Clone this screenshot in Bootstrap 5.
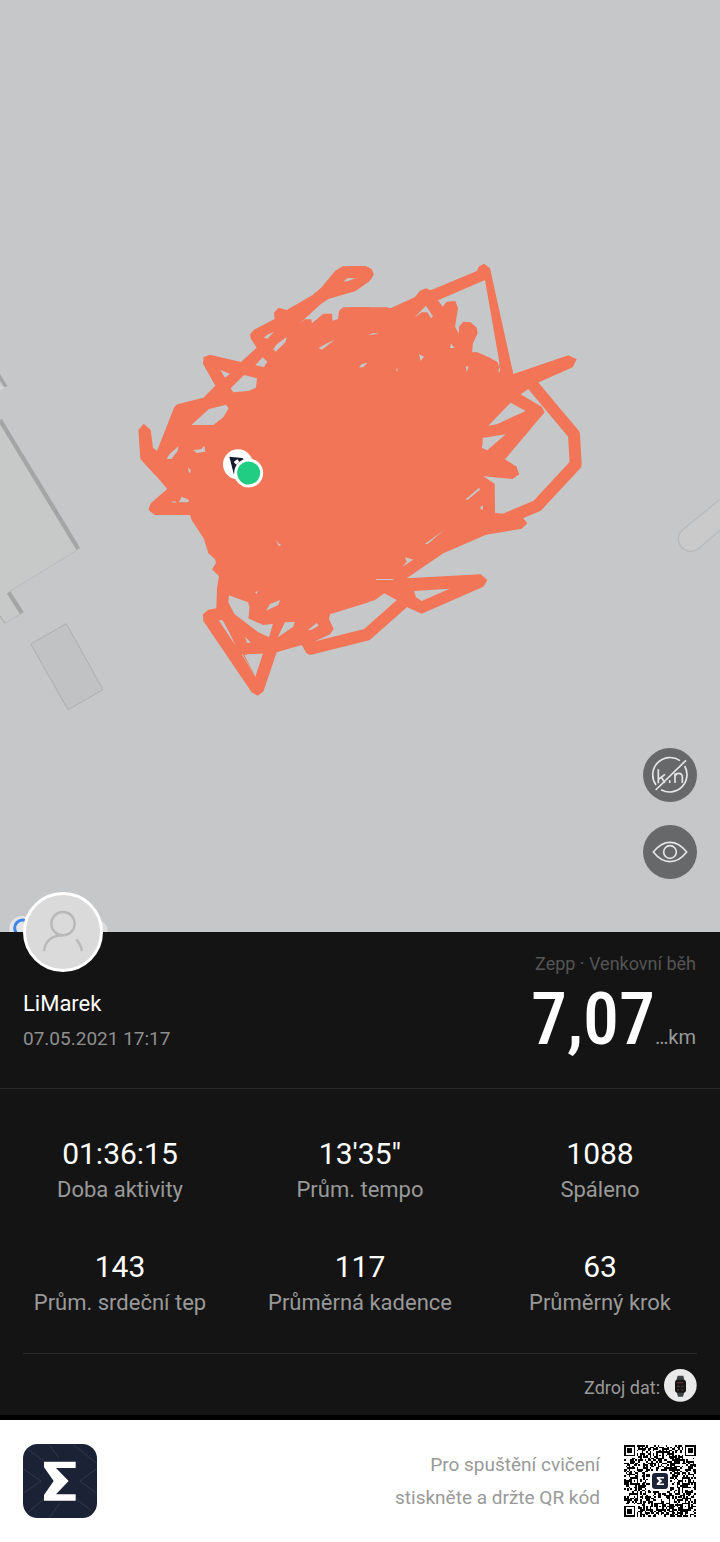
<!DOCTYPE html>
<html lang="cs">
<head>
<meta charset="utf-8">
<meta name="viewport" content="width=device-width, initial-scale=1">
<title>Zepp · Venkovní běh</title>
<link href="https://cdn.jsdelivr.net/npm/bootstrap@5.3.0/dist/css/bootstrap.min.css" rel="stylesheet">
<style>
  body { font-family: Roboto, "Noto Sans", sans-serif; background: #fff; }
  .route-map { background: #c6c7c9; }
  .map-tools { right: 23px; bottom: 53px; gap: 23px; }
  .tool-btn { width: 54px; height: 54px; background: #666869; border-radius: 50%; }
  .summary { background: #141414; border-bottom: 5px solid #000; }
  .runner { padding: 16px 24px 30px 23px; border-bottom: 1px solid #2b2b2b; }
  .avatar { left: 23px; top: -40px; width: 80px; height: 80px; border: 3px solid #fff; background: #dadada; }
  .runner-name { font-size: 22px; line-height: 30px; padding-top: 41px; color: #fff; }
  .run-date { font-size: 19px; line-height: 30px; margin-top: 5px; color: #8f8f8f; }
  .run-kind { font-size: 18px; line-height: 32px; color: #555; }
  .distance { font-family: "Roboto Condensed", Roboto, sans-serif; font-weight: 500; font-size: 72px; line-height: 77px; padding-top: 1px; color: #fff; }
  .unit { font-size: 20px; color: #999; }
  .stats { padding: 45px 0 28px; row-gap: 35px; }
  .stat-value { font-size: 30px; line-height: 40px; color: #fff; }
  .stat-label { font-size: 22px; line-height: 32px; margin: 0; color: #999; padding-bottom: 6px; }
  .source { margin: 0 23px; padding: 15px 0 13px; border-top: 1px solid #2b2b2b; font-size: 18px; color: #999; gap: 4px; }
  .app-bar { padding: 24px 24px 24px 23px; }
  .hint { font-size: 19px; line-height: 33px; color: #999; }
</style>
</head>
<body>
<main>
  <section class="route-map position-relative" aria-label="Mapa trasy">
    <svg class="d-block w-100" viewBox="0 0 2160 2796" role="img" aria-label="Trasa běhu">
      <g transform="translate(0 1080)">
        <path d="M0 175L235 568L28 695L70 757L15 790L0 770Z" fill="#c7c9c8"/>
        <path d="M0 180L235 567M26 697L66 760" stroke="#a4a6a5" stroke-width="13" fill="none"/>
        <path d="M0 42L22 78L14 82L0 62Z" fill="#a4a6a5"/>
        <path d="M0 75L12 83L0 92Z" fill="#d4d5d5"/>
        <path d="M235 568L28 695M70 757L15 790" stroke="#b9bbbb" stroke-width="3"/>
        <path d="M0 768L15 790" stroke="#a4a6a5" stroke-width="3"/>
        <path d="M92 852L199 791L309 989L204 1049Z" fill="#c1c2c4" stroke="#adafb1" stroke-width="3"/>
      </g>
      <path d="M2200 1465L2045 1592A37 37 0 0 0 2094 1647L2200 1556" fill="#cacaca" stroke="#b7b9bb" stroke-width="4"/>
      <g fill="#f17556">
        <path transform="translate(390 765)" d="M720 40L705 33L638 34L615 48L575 97L548 120L470 165L446 158L432 173L434 192L372 224L360 238L362 250L380 278L333 321L240 299L221 306L219 326L256 392L220 428L142 448L133 456L81 588L69 578L62 525L41 506L25 525L31 612L75 660L720 660L720 157L640 157L627 167L624 192L608 197L606 176L580 176L546 205L544 193L525 193L505 209L570 149L595 132L677 108L720 77Z"/>
        <path transform="translate(1050 765)" d="M0 33L45 33L65 42L71 58L64 72L15 106L0 112Z"/>
        <path transform="translate(1050 765)" d="M0 157L110 157L122 160L195 126L210 107L228 100L242 106L381 48L386 35L402 26L420 40L490 357L655 301L680 313L668 337L568 381L535 402L512 418L575 455L584 472L465 613L500 635L507 660L0 660Z"/>
        <path transform="translate(390 1395)" d="M50 0L112 72L62 115L55 135L75 150L180 150L185 165L222 222L235 265L255 282L258 295L246 313L267 333L261 370L259 430L235 434L219 448L220 468L365 682L383 692L400 680L440 562L515 540L552 530L600 508L611 492L597 462L600 448L720 410L720 0Z"/>
        <path transform="translate(1050 1395)" d="M0 0L485 0L500 10L507 28L488 42L400 34L434 56L435 143L465 147L520 160L532 175L515 191L408 209L280 265L170 340L392 328L412 346L400 365L215 446L175 428L140 405L103 385L75 405L0 428Z"/>
      </g>
      <g fill="none" stroke="#f17556" stroke-width="36" stroke-linejoin="round" stroke-linecap="round">
        <path d="M1588 1143L1722 1303L1727 1393L1612 1517L1510 1560"/>
        <path d="M1212 1805L1100 1904L932 1946L922 1928"/>
      </g>
      <g fill="#c6c7c9">
        <path transform="translate(390 765)" d="M640 80L652 70L677 69L655 78ZM402 248L410 240L432 230L412 251ZM430 283L440 268L470 246L466 262L437 290ZM376 331L398 307L412 320L402 336ZM271 345L300 356L285 368ZM302 400L342 360L381 370L378 398L355 408L310 412ZM184 510L237 462L288 449L296 460L280 487L250 510ZM110 612L118 598L145 574L143 588L124 612ZM190 585L213 583L223 572L226 590L200 594ZM174 637L182 645L181 655L176 650ZM566 280L585 268L614 255L575 284ZM688 336L695 327L712 323L700 337Z"/>
        <path transform="translate(1050 765)" d="M264 136L405 75L448 322L448 338L443 322L420 308L380 291L366 292L369 265L383 235L380 218L362 202L340 200L327 215L327 237L315 215L324 160L316 138L290 140L278 155ZM482 443L415 512L440 508L527 468ZM398 549L467 538L412 586L395 578L398 565ZM193 188L215 165L228 152L249 184L243 190L232 172L215 172ZM54 241L70 234L88 236ZM27 337L50 323L35 337ZM207 297L222 305L212 318ZM303 266L314 278L300 280ZM347 333L356 335L350 352ZM138 345L142 338L143 350ZM445 345L452 335L448 355Z"/>
        <path transform="translate(390 1395)" d="M147 112L155 95L177 105L175 112ZM122 112L135 108L138 113ZM438 222L445 235L454 240L445 243ZM375 382L384 378L380 387ZM297 391L354 412L359 428L355 460L372 468L400 480L429 476L417 517L385 502L313 447L295 412ZM408 437L420 417L450 405L445 420ZM266 466L278 466L297 500L316 540L326 556ZM345 515L363 533L351 534ZM465 472L494 470L490 485L443 517ZM335 568L398 566L376 635ZM533 496L560 474L566 482L545 494Z"/>
        <path transform="translate(390 1395)" fill="#f17556" d="M322 540L376 635L384 612L345 560Z"/>
        <path transform="translate(390 1395)" d="M343 570L398 566L376 635Z"/>
        <path transform="translate(1050 1395)" d="M347 103L387 68L390 74L352 105ZM389 128L399 121L398 136ZM225 236L283 195L232 238ZM165 277L190 284L157 305L170 290ZM78 342H130V345H78ZM192 378L299 371L215 408L198 397Z"/>
      </g>
      <circle cx="714" cy="1393" r="45" fill="#fff"/>
      <path d="M688 1370L727 1374L752 1398L712 1400L702 1424Z" fill="#15192c"/>
      <path d="M701 1386l11-8 6 7-9 9zM720 1390l12-6 5 8-14 4z" fill="#fff"/>
      <circle cx="746" cy="1419" r="39" fill="#20cd83" stroke="#fff" stroke-width="9"/>
      <circle cx="66" cy="2786" r="38" fill="#e3e5e9"/>
      <circle cx="68" cy="2784" r="24" fill="none" stroke="#4284e4" stroke-width="9"/>
      <circle cx="290" cy="2792" r="33" fill="#dddbdc"/>
    </svg>
    <div class="map-tools position-absolute d-flex flex-column">
      <button type="button" class="tool-btn border-0 p-0 d-flex" aria-label="Skrýt kilometry">
        <svg width="54" height="54" viewBox="0 0 162 162" fill="none" stroke="#e6e6e6" stroke-width="5">
          <path d="M111 38A52 52 0 0 0 39 111M54 125A52 52 0 0 0 125 54M38 126L129 37M46 64V106M66 79L48 93M56 88L65 105M96 105V76M96 86Q98 76 107 76Q118 76 118 88V105M80 97V105"/>
        </svg>
      </button>
      <button type="button" class="tool-btn border-0 p-0 d-flex" aria-label="Zobrazit mapu">
        <svg width="54" height="54" viewBox="0 0 162 162" fill="none" stroke="#e6e6e6" stroke-width="5">
          <path d="M31 81Q54 52 81 52T131 81Q108 110 81 110T31 81Z"/><circle cx="81" cy="81" r="19"/>
        </svg>
      </button>
    </div>
  </section>

  <section class="summary">
    <header class="runner position-relative d-flex justify-content-between">
      <div class="avatar position-absolute rounded-circle">
        <svg class="d-block" width="74" height="74" viewBox="0 0 222 222" fill="none" stroke="#b8b8b8" stroke-width="7">
          <circle cx="111" cy="86" r="35"/><path d="M54 168Q60 121 111 121M151 133Q164 147 168 168"/>
        </svg>
      </div>
      <div>
        <div class="runner-name">LiMarek</div>
        <div class="run-date">07.05.2021 17:17</div>
      </div>
      <div class="text-end">
        <div class="run-kind">Zepp · Venkovní běh</div>
        <div class="d-flex align-items-baseline justify-content-end"><span class="distance">7,07</span><span class="unit">…km</span></div>
      </div>
    </header>

    <div class="stats row g-0 text-center">
      <div class="col-4"><div class="stat-value">01:36:15</div><p class="stat-label">Doba aktivity</p></div>
      <div class="col-4"><div class="stat-value">13'35"</div><p class="stat-label">Prům. tempo</p></div>
      <div class="col-4"><div class="stat-value">1088</div><p class="stat-label">Spáleno</p></div>
      <div class="col-4"><div class="stat-value">143</div><p class="stat-label">Prům. srdeční tep</p></div>
      <div class="col-4"><div class="stat-value">117</div><p class="stat-label">Průměrná kadence</p></div>
      <div class="col-4"><div class="stat-value">63</div><p class="stat-label">Průměrný krok</p></div>
    </div>

    <div class="source d-flex justify-content-end align-items-center">
      <span class="pt-1">Zdroj dat:</span>
      <svg width="33" height="33" viewBox="0 0 99 99" role="img" aria-label="Hodinky">
        <circle cx="49" cy="49" r="49" fill="#e9e9e9"/>
        <path d="M41 20H58L62 36V66L57 83H42L37 66V34Z" fill="#3c4244"/>
        <rect x="33" y="32" width="33" height="39" rx="8" fill="#171617"/>
        <path d="M39 41h18M39 52h8M52 52h7M39 63h6M52 63h5" stroke="#66383a" stroke-width="3"/>
      </svg>
    </div>
  </section>
</main>

<footer class="app-bar d-flex align-items-center justify-content-between bg-white">
  <svg width="74" height="74" viewBox="0 0 222 222" role="img" aria-label="Zepp">
    <rect width="222" height="222" rx="44" fill="#1b2236"/>
    <g fill="none" stroke="#323949" stroke-width="3">
      <path d="M2 75L54 111L2 147M14 16L64 52M78 2L108 42M220 75L170 111L220 147M150 2L220 57M64 164L14 206M112 176L80 220M158 164L206 200"/>
    </g>
    <path d="M63 53H158V72H99L137 111L99 151H158V170H63V153L92 111L63 70Z" fill="#fff"/>
  </svg>
  <div class="d-flex align-items-center gap-4">
    <div class="hint text-end">Pro spuštění cvičení<br>stiskněte a držte QR kód</div>
    <svg id="qr" width="72" height="72" viewBox="0 0 45 45" role="img" aria-label="QR kód" shape-rendering="crispEdges">
      <path id="qr-modules" fill="#000"/>
      <rect x="16" y="16" width="13" height="13" fill="#fff"/>
      <rect x="17.500" y="17.500" width="10" height="10" rx="2" fill="#1b2236" shape-rendering="auto"/>
      <path d="M20.500 20H25V21H22L24 22.500L22 24H25V25H20.500V24L22 22.500L20.500 21Z" fill="#fff" shape-rendering="auto"/>
    </svg>
  </div>
</footer>

<script src="https://cdn.jsdelivr.net/npm/bootstrap@5.3.0/dist/js/bootstrap.bundle.min.js"></script>
<script>
  // Build the 45 x 45 code: three finders, alignment marks, timing lines, data modules.
  const size = 45;
  let seed = 20210507, d = "";
  const next = () => (seed = (seed * 1103515245 + 12345) % 2147483648) / 2147483648;
  const ring = (x, y, cx, cy) => Math.max(Math.abs(x - cx), Math.abs(y - cy));
  for (let y = 0; y < size; y++) {
    for (let x = 0; x < size; x++) {
      let on = next() < 0.5;
      if (x === 6 || y === 6) on = (x + y) % 2 === 0;
      for (const [cx, cy] of [[22, 6], [6, 22], [38, 22], [22, 38], [38, 38]]) {
        const r = ring(x, y, cx, cy);
        if (r <= 2) on = r !== 1;
      }
      for (const [cx, cy] of [[3, 3], [41, 3], [3, 41]]) {
        const r = ring(x, y, cx, cy);
        if (r <= 4) on = r === 3 || r < 2;
      }
      if (on) d += `M${x} ${y}h1v1h-1z`;
    }
  }
  document.getElementById("qr-modules").setAttribute("d", d);
</script>
</body>
</html>
